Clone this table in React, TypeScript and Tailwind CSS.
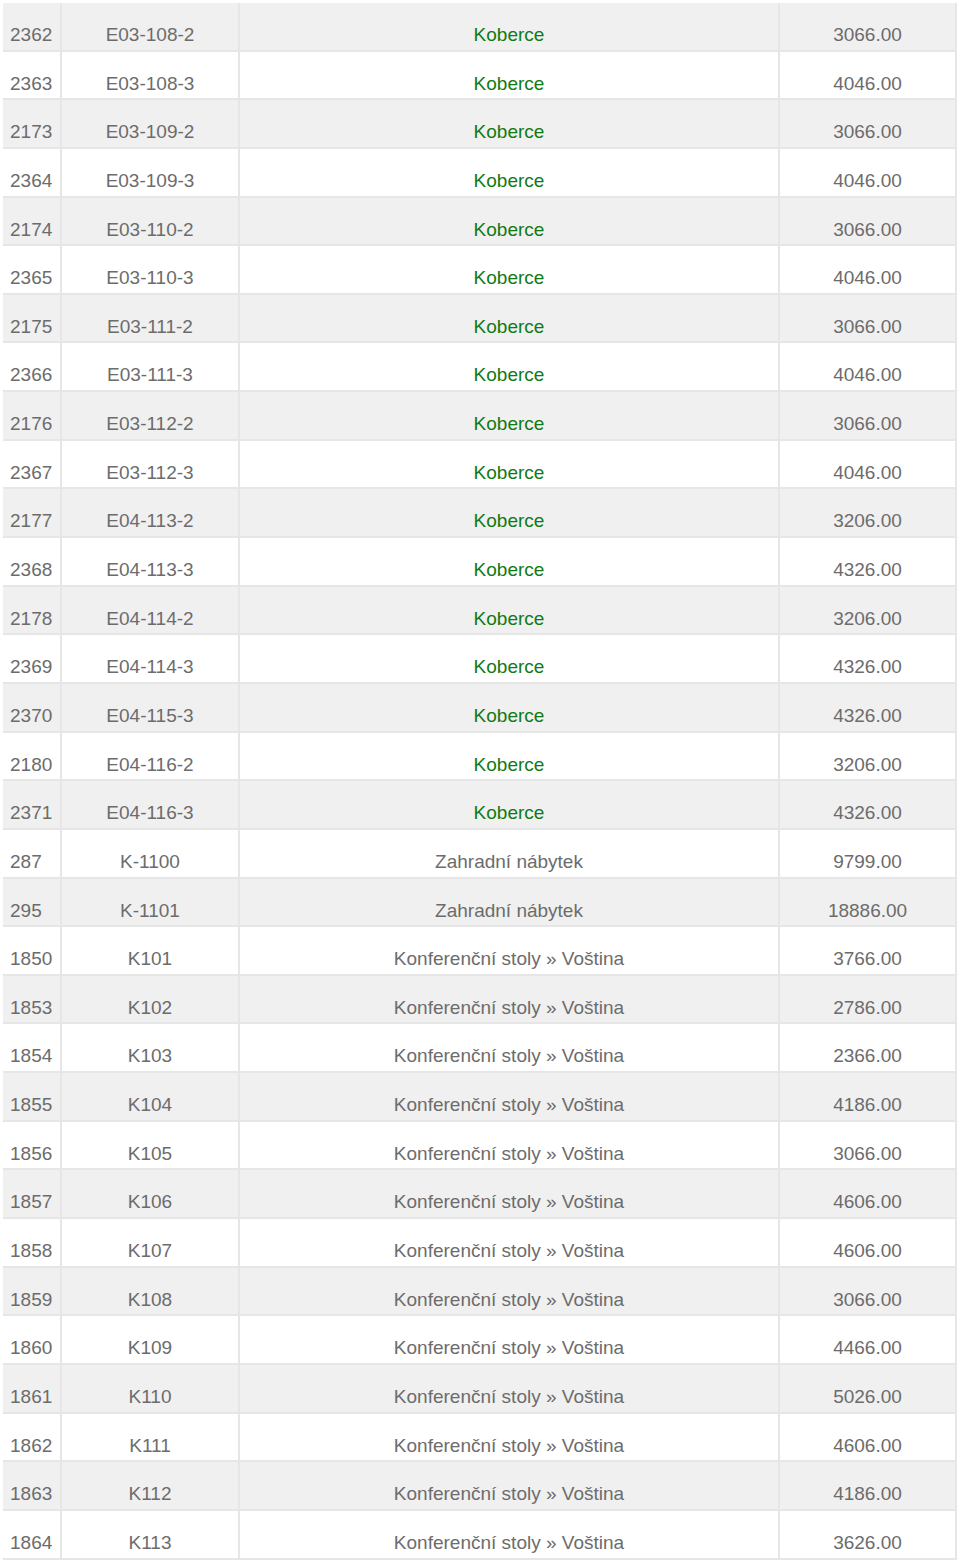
import React from 'react';

type Row = [string, string, string, string];

const rows: Row[] = [
  ['2362', 'E03-108-2', 'Koberce', '3066.00'],
  ['2363', 'E03-108-3', 'Koberce', '4046.00'],
  ['2173', 'E03-109-2', 'Koberce', '3066.00'],
  ['2364', 'E03-109-3', 'Koberce', '4046.00'],
  ['2174', 'E03-110-2', 'Koberce', '3066.00'],
  ['2365', 'E03-110-3', 'Koberce', '4046.00'],
  ['2175', 'E03-111-2', 'Koberce', '3066.00'],
  ['2366', 'E03-111-3', 'Koberce', '4046.00'],
  ['2176', 'E03-112-2', 'Koberce', '3066.00'],
  ['2367', 'E03-112-3', 'Koberce', '4046.00'],
  ['2177', 'E04-113-2', 'Koberce', '3206.00'],
  ['2368', 'E04-113-3', 'Koberce', '4326.00'],
  ['2178', 'E04-114-2', 'Koberce', '3206.00'],
  ['2369', 'E04-114-3', 'Koberce', '4326.00'],
  ['2370', 'E04-115-3', 'Koberce', '4326.00'],
  ['2180', 'E04-116-2', 'Koberce', '3206.00'],
  ['2371', 'E04-116-3', 'Koberce', '4326.00'],
  ['287', 'K-1100', 'Zahradní nábytek', '9799.00'],
  ['295', 'K-1101', 'Zahradní nábytek', '18886.00'],
  ['1850', 'K101', 'Konferenční stoly » Voština', '3766.00'],
  ['1853', 'K102', 'Konferenční stoly » Voština', '2786.00'],
  ['1854', 'K103', 'Konferenční stoly » Voština', '2366.00'],
  ['1855', 'K104', 'Konferenční stoly » Voština', '4186.00'],
  ['1856', 'K105', 'Konferenční stoly » Voština', '3066.00'],
  ['1857', 'K106', 'Konferenční stoly » Voština', '4606.00'],
  ['1858', 'K107', 'Konferenční stoly » Voština', '4606.00'],
  ['1859', 'K108', 'Konferenční stoly » Voština', '3066.00'],
  ['1860', 'K109', 'Konferenční stoly » Voština', '4466.00'],
  ['1861', 'K110', 'Konferenční stoly » Voština', '5026.00'],
  ['1862', 'K111', 'Konferenční stoly » Voština', '4606.00'],
  ['1863', 'K112', 'Konferenční stoly » Voština', '4186.00'],
  ['1864', 'K113', 'Konferenční stoly » Voština', '3626.00'],
];

const App = () => {
  return (
    <div className="bg-white pt-[3px] pl-[3px] min-h-[1560px] text-[19px] leading-[22px] text-[#6c6c6c] font-['Liberation_Sans',Arial,sans-serif]">
      <div className="w-[954px] flex flex-col">
        {rows.map(([id, code, category, price], i) => (
          <div
            key={id}
            className={`flex h-[48.65px] border-b-2 border-[#e6e6e6] ${i % 2 === 0 ? 'bg-[#f0f0f0]' : 'bg-white'}`}
          >
            <div className="w-[59px] shrink-0 pl-[7px] pt-[21px] border-r-2 border-[#e6e6e6]">{id}</div>
            <div className="w-[178px] shrink-0 text-center pt-[21px] border-r-2 border-[#e6e6e6]">{code}</div>
            <div
              className={`w-[540px] shrink-0 text-center pt-[21px] border-r-2 border-[#e6e6e6] ${category === 'Koberce' ? 'text-[#117a11]' : ''}`}
            >
              {category}
            </div>
            <div className="flex-1 text-center pt-[21px] border-r-2 border-[#e6e6e6]">{price}</div>
          </div>
        ))}
      </div>
    </div>
  );
};

export default App;
